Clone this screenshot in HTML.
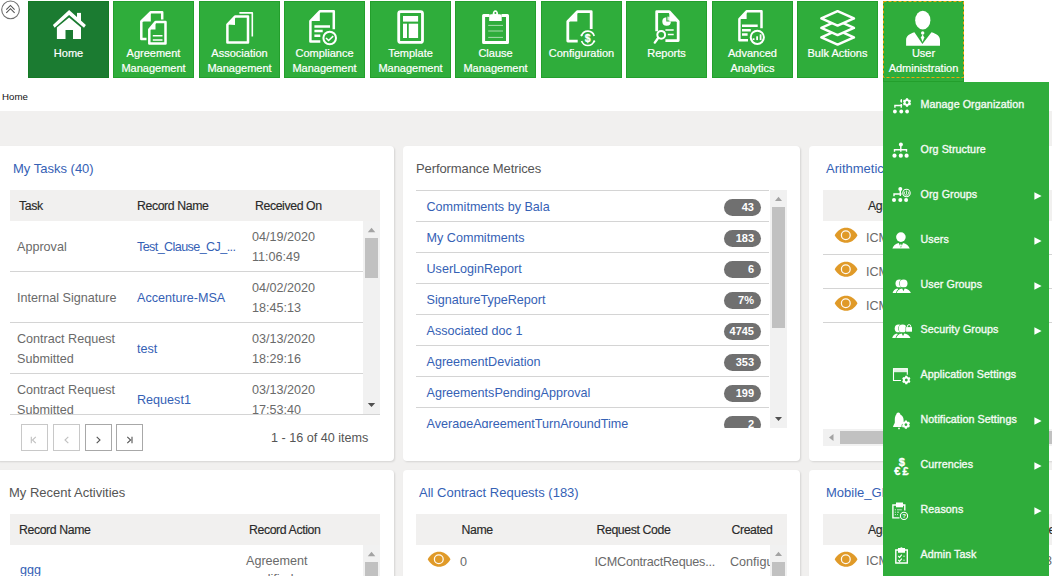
<!DOCTYPE html>
<html><head><meta charset="utf-8">
<style>
*{box-sizing:border-box;margin:0;padding:0}
html,body{width:1052px;height:576px;overflow:hidden;background:#fff;font-family:"Liberation Sans",sans-serif;position:relative}
.a{position:absolute;white-space:nowrap}
.tile{position:absolute;top:1px;width:81px;height:77px;background:#2fad3b;box-shadow:inset 0 0 0 1px rgba(0,120,0,0.25);color:#fff;font-size:11px;line-height:15px;text-align:center}
.tile .lbl{position:absolute;left:-10px;right:-10px;top:45px;-webkit-text-stroke:0.2px #fff}
.tile svg{position:absolute;left:0;top:0}
.gray{position:absolute;left:0;top:111px;width:1052px;height:465px;background:#f1f0ef}
.panel{position:absolute;background:#fff;border-radius:4px;box-shadow:1px 1px 2px rgba(0,0,0,0.12)}
.ttl{position:absolute;font-size:13px;white-space:nowrap}
.blue{color:#3561b5}
.hdr{position:absolute;background:#f1f0ef;height:31px}
.hdr span{position:absolute;top:9px;font-size:12.3px;color:#2a2a2a;white-space:nowrap;letter-spacing:-0.4px;-webkit-text-stroke:0.15px #2a2a2a}
.txt{position:absolute;font-size:12.6px;color:#6a6a6a;white-space:nowrap;line-height:20px}
.lnk{position:absolute;font-size:12.6px;color:#3561b5;white-space:nowrap;line-height:20px}
.sep{position:absolute;height:1px;background:#d4d4d4}
.track{position:absolute;background:#f1f1f1}
.thumb{position:absolute;background:#c1c1c1}
.badge{position:absolute;width:37px;height:17px;border-radius:8.5px;background:#707070;color:#fff;font-weight:bold;font-size:11px;line-height:17px;text-align:right;padding-right:7px}
.menu{position:absolute;left:883px;top:82px;width:166px;height:494px;background:#2fad3b}
.mi{position:absolute;left:37.5px;font-size:10.7px;font-weight:normal;color:#f4faf4;letter-spacing:0.09px;white-space:nowrap;-webkit-text-stroke:0.35px #f4faf4}
.arr{position:absolute;left:151px;width:8px;height:8px}
.pbtn{position:absolute;top:424px;width:27px;height:27px;border:1px solid #c8c8c8;background:#fff}
</style></head><body>

<!-- collapse circle -->
<svg class="a" style="left:0;top:0" width="22" height="22" viewBox="0 0 22 22">
<circle cx="10.55" cy="9.85" r="8.85" fill="none" stroke="#707070" stroke-width="1.1"/>
<path d="M6.3,9.7 L10.45,5.4 L14.6,9.7 M6.3,12.8 L10.45,8.7 L14.6,12.8" fill="none" stroke="#505050" stroke-width="1.05"/>
</svg>

<!-- tiles -->
<div class="tile" style="left:28px;background:#1b7b31"><div class="lbl">Home</div></div>
<div class="tile" style="left:113px"><div class="lbl">Agreement<br>Management</div></div>
<div class="tile" style="left:199px"><div class="lbl">Association<br>Management</div></div>
<div class="tile" style="left:284px"><div class="lbl">Compliance<br>Management</div></div>
<div class="tile" style="left:370px"><div class="lbl">Template<br>Management</div></div>
<div class="tile" style="left:455px"><div class="lbl">Clause<br>Management</div></div>
<div class="tile" style="left:541px"><div class="lbl">Configuration</div></div>
<div class="tile" style="left:626px"><div class="lbl">Reports</div></div>
<div class="tile" style="left:712px"><div class="lbl">Advanced<br>Analytics</div></div>
<div class="tile" style="left:797px"><div class="lbl">Bulk Actions</div></div>
<div class="tile" style="left:883px;height:81px"><div class="lbl">User<br>Administration</div></div>
<svg class="a" style="left:883px;top:1px" width="81" height="77"><rect x="0.5" y="0.5" width="80" height="76" fill="none" stroke="#f2a20a" stroke-width="1" stroke-dasharray="3 2"/></svg>

<svg class="a" style="left:0;top:0;pointer-events:none" width="1052" height="80" viewBox="0 0 1052 80">
<g fill="#fff" stroke="none">
<!-- Home -->
<rect x="77" y="12.9" width="4" height="9"/>
<polygon points="52.9,25.1 69.1,10 85.9,25.1 84,27.8 69.1,15 54.6,27.8"/>
<polygon points="69.1,17.6 81,27.6 81,39 73,39 73,30 65.5,30 65.5,39 56.9,39 56.9,27.6"/>
</g>
<g fill="none" stroke="#fff" stroke-width="2.5" stroke-linejoin="round">
<!-- Agreement back doc -->
<path d="M146.5,39 H141.3 V21.5 L150.8,12.2 H162.2 V19.5"/>
<!-- Agreement front doc -->
<path d="M155.5,22 H165.5 V43.5 H149.3 V29.5 Z"/>
<path d="M152.8,35.7 H162.5 M152.8,39.9 H162.5" stroke-width="1.5"/>
<!-- Association -->
<path d="M235,16.6 H248 V42.6 H227.4 V24.5 Z"/>
<path d="M239.4,12.9 H252.3 V36.5" stroke-width="1.6"/>
<!-- Compliance -->
<path d="M320.3,41.4 H310.4 V21 L319.8,11.3 H333.8 V29.3"/>
<path d="M314.4,26.5 H330 M314.4,31.1 H322.7 M314.4,35.7 H320.3"/>
<circle cx="329.7" cy="38" r="6.3" stroke-width="2"/>
<path d="M326,38 L328.6,40.5 L333.2,36.2" stroke-width="1.6" stroke-linejoin="miter"/>
<!-- Template -->
<rect x="398.7" y="11.6" width="23.8" height="30.8" rx="2" stroke-width="2.8"/>
<!-- Clause -->
<path d="M489.5,15.6 H483.6 V42.5 H507.5 V15.6 H501.5" stroke-width="3"/>
<path d="M488.2,25.4 H503 M488.2,31 H503 M488.2,37.4 H503" stroke-width="0.9" stroke-opacity="0.65"/>
<!-- Configuration -->
<path d="M577.7,41.1 H567.8 V21.5 L577.3,11.6 H591.2 V29" stroke-width="2.8"/>
<path d="M581.6,35.6 A6.6,6.6 0 0 1 594.2,36 M594.1,40.9 A6.6,6.6 0 0 1 581.6,41" stroke-width="1.6"/>
<!-- Reports -->
<path d="M665.4,40.6 H678.2 V21.5 L669.3,11.6 H656.7 V31.3" stroke-width="2.8"/>
<path d="M665.4,30 H673.7 M667.8,34.5 H673.7" stroke-width="1.6"/>
<circle cx="661.2" cy="34.8" r="3.9" stroke-width="2"/>
<path d="M658.3,37.8 L654.8,42.6" stroke-width="2.4" stroke-linecap="round"/>
<!-- Advanced Analytics -->
<path d="M748,40.3 H739.4 V19 L746.6,11.3 H761.5 V28.2"/>
<path d="M742,25.7 H757.7 M742,30.3 H750.75 M742,34.5 H747.6"/>
<circle cx="757.3" cy="37.3" r="6.6" stroke-width="2"/>
<!-- Bulk actions -->
<g fill="#2fad3b" stroke-width="2.5" stroke-linejoin="round">
<polygon points="821.35,37.4 837.6,30.2 853.95,37.4 837.6,44.6"/>
<polygon points="821.35,27.9 837.6,20.7 853.95,27.9 837.6,35.1"/>
<polygon points="821.35,18.4 837.6,11.2 853.95,18.4 837.6,25.6"/>
</g>
</g>
<g fill="#fff">
<!-- Agreement folds -->
<polygon points="141.3,21.5 150.8,12.2 150.8,21.5"/>
<polygon points="149.3,29.5 155.5,22 155.5,29.5"/>
<polygon points="227.3,24.5 235,16.5 235,25"/>
<polygon points="310.4,21 319.8,11.3 319.8,21"/>
<!-- template blocks -->
<rect x="403" y="16" width="15.1" height="5.6"/>
<rect x="403" y="23.7" width="4" height="14.3"/>
<rect x="408.75" y="23.7" width="9.35" height="14.3"/>
<!-- clause clip -->
<path d="M489.2,21 V15.8 Q489.2,14.2 491,14.2 H492.6 C492.8,12.4 493.6,10.2 495.4,10.2 C497.2,10.2 498,12.4 498.2,14.2 H499.9 Q501.7,14.2 501.7,15.8 V21 Z"/>
<polygon points="567.8,21.5 577.3,11.6 577.3,21.5"/>
<polygon points="669.3,11.6 678.2,21.5 669.3,21.5"/>
<path d="M666.3,17.2 A4.3,4.3 0 1 0 670.9,21.4 H666.3 Z"/><path d="M667.4,16.6 A4.3,4.3 0 0 1 671.4,20.4 H667.4 Z" opacity="0.8"/>
<polygon points="739.4,19 746.6,11.3 746.6,19"/>
<rect x="752.7" y="38.3" width="1.8" height="1.8"/>
<rect x="756.2" y="36.3" width="1.8" height="3.8"/>
<rect x="759.7" y="34.3" width="1.8" height="5.8"/>
<!-- user admin -->
<ellipse cx="922.8" cy="20.2" rx="7.6" ry="9.4"/>
<path d="M906.1,45.7 V40 C906.1,36 910,33.5 914.4,32.3 L922.4,44 L931.5,32.3 C936,33.5 940,36 940,40 V45.7 Z"/>
<circle cx="922.7" cy="33" r="1.7"/>
<polygon points="922.7,34.5 924.3,37.5 922.5,42 920.9,37.5"/>
</g>
<text x="587.6" y="42.2" font-family="Liberation Sans" font-weight="bold" font-size="10.5" fill="#fff" stroke="#fff" stroke-width="0.3" text-anchor="middle">$</text>
<circle cx="581.5" cy="35.3" r="1.1" fill="#fff"/><circle cx="594.2" cy="41.3" r="1.1" fill="#fff"/>
<circle cx="495.4" cy="12.9" r="1" fill="#2fad3b"/>
</svg>

<div class="a" style="left:2px;top:91.3px;font-size:9.7px;color:#111">Home</div>

<div class="gray"></div>

<!-- Panel 1: My Tasks -->
<div class="panel" style="left:-4px;top:146px;width:398px;height:315px"></div>
<div class="ttl blue" style="left:13px;top:161px">My Tasks (40)</div>
<div class="hdr" style="left:10px;top:190px;width:370px"><span style="left:9px">Task</span><span style="left:127px">Record Name</span><span style="left:245px">Received On</span></div>
<div class="track" style="left:363px;top:221px;width:17px;height:193px"></div>
<div class="thumb" style="left:365px;top:238px;width:13px;height:40px"></div>
<div class="sep" style="left:10px;top:271px;width:353px"></div>
<div class="sep" style="left:10px;top:322px;width:353px"></div>
<div class="sep" style="left:10px;top:373px;width:353px"></div>
<div class="sep" style="left:10px;top:414px;width:370px"></div>

<!-- P1 rows -->
<div class="txt" style="left:17px;top:237px">Approval</div>
<div class="lnk" style="left:137px;top:237px"><span style="letter-spacing:-0.6px">Test_Clause_CJ_...</span></div>
<div class="txt" style="left:252px;top:227px">04/19/2020<br>11:06:49</div>
<div class="txt" style="left:17px;top:288px">Internal Signature</div>
<div class="lnk" style="left:137px;top:288px">Accenture-MSA</div>
<div class="txt" style="left:252px;top:278px">04/02/2020<br>18:45:13</div>
<div class="txt" style="left:17px;top:329px">Contract Request<br>Submitted</div>
<div class="lnk" style="left:137px;top:339px">test</div>
<div class="txt" style="left:252px;top:329px">03/13/2020<br>18:29:16</div>
<div class="a" style="left:0;top:374px;width:363px;height:40px;overflow:hidden">
<div class="txt" style="left:17px;top:6px">Contract Request<br>Submitted</div>
<div class="lnk" style="left:137px;top:16px">Request1</div>
<div class="txt" style="left:252px;top:6px">03/13/2020<br>17:53:40</div>
</div>
<svg class="a" style="left:363px;top:221px" width="17" height="193">
<path d="M4.8,11.2 L8.5,6.8 L12.3,11.2 Z" fill="#a3a3a3"/>
<path d="M4.8,182 L8.5,186 L12.2,182 Z" fill="#505050"/>
</svg>
<!-- pager -->
<div class="pbtn" style="left:21px"></div>
<div class="pbtn" style="left:53px"></div>
<div class="pbtn" style="left:85px;border-color:#a8a8a8"></div>
<div class="pbtn" style="left:116px;border-color:#a8a8a8"></div>
<svg class="a" style="left:0;top:420px" width="160" height="36">
<g fill="none" stroke-width="1.1">
<path d="M31.3,16.8 V23.2 M35.8,16.8 L32.5,20 L35.8,23.2" stroke="#c0c0c0"/>
<path d="M68.3,16.8 L65,20 L68.3,23.2" stroke="#c0c0c0"/>
<path d="M96.7,16.8 L100,20 L96.7,23.2" stroke="#555"/>
<path d="M127.3,16.8 L130.6,20 L127.3,23.2 M132,16.8 V23.2" stroke="#555"/>
</g>
</svg>
<div class="txt" style="left:271px;top:428px;color:#555">1 - 16 of 40 items</div>

<!-- Panel 2: Performance -->
<div class="panel" style="left:403px;top:146px;width:397px;height:315px"></div>
<div class="ttl" style="left:416px;top:161px;color:#555;letter-spacing:-0.1px">Performance Metrices</div>

<div class="a" style="left:416px;top:190px;width:354px;height:238px;overflow:hidden">
<div class="sep" style="left:0;top:0px;width:353px"></div>
<div class="lnk" style="left:10.5px;top:7px">Commitments by Bala</div>
<div class="badge" style="left:308px;top:9px">43</div>
<div class="sep" style="left:0;top:31px;width:353px"></div>
<div class="lnk" style="left:10.5px;top:38px">My Commitments</div>
<div class="badge" style="left:308px;top:40px">183</div>
<div class="sep" style="left:0;top:62px;width:353px"></div>
<div class="lnk" style="left:10.5px;top:69px">UserLoginReport</div>
<div class="badge" style="left:308px;top:71px">6</div>
<div class="sep" style="left:0;top:93px;width:353px"></div>
<div class="lnk" style="left:10.5px;top:100px">SignatureTypeReport</div>
<div class="badge" style="left:308px;top:102px">7%</div>
<div class="sep" style="left:0;top:124px;width:353px"></div>
<div class="lnk" style="left:10.5px;top:131px">Associated doc 1</div>
<div class="badge" style="left:308px;top:133px">4745</div>
<div class="sep" style="left:0;top:155px;width:353px"></div>
<div class="lnk" style="left:10.5px;top:162px">AgreementDeviation</div>
<div class="badge" style="left:308px;top:164px">353</div>
<div class="sep" style="left:0;top:186px;width:353px"></div>
<div class="lnk" style="left:10.5px;top:193px">AgreementsPendingApproval</div>
<div class="badge" style="left:308px;top:195px">199</div>
<div class="sep" style="left:0;top:217px;width:353px"></div>
<div class="lnk" style="left:10.5px;top:224px">AverageAgreementTurnAroundTime</div>
<div class="badge" style="left:308px;top:226px">2</div>
</div>
<div class="track" style="left:770px;top:190px;width:17px;height:238px"></div>
<div class="thumb" style="left:772px;top:207px;width:13px;height:121px"></div>
<svg class="a" style="left:770px;top:190px" width="17" height="238">
<path d="M5,11 L8.5,6.7 L12,11 Z" fill="#a3a3a3"/>
<path d="M5,227 L8.5,231 L12,227 Z" fill="#505050"/>
</svg>

<!-- Panel 3: Arithmetic -->
<div class="panel" style="left:809px;top:146px;width:400px;height:315px"></div>
<div class="ttl blue" style="left:826px;top:161px">Arithmetic Metrics</div>
<div class="a" style="left:809px;top:146px;width:243px;height:315px;overflow:hidden">
<div class="hdr" style="left:14px;top:44px;width:400px"><span style="left:45px">Agreement Code</span></div>
<div class="sep" style="left:14px;top:108px;width:400px"></div>
<div class="sep" style="left:14px;top:142px;width:400px"></div>
<div class="sep" style="left:14px;top:176px;width:400px"></div>
<div class="txt" style="left:57px;top:81.5px">ICMAgreement</div>
<div class="txt" style="left:57px;top:115.5px">ICMAgreement</div>
<div class="txt" style="left:57px;top:149.5px">ICMAgreement</div>
<div class="track" style="left:14px;top:283px;width:400px;height:17px"></div>
<div class="thumb" style="left:31px;top:285px;width:300px;height:13px"></div>
<svg class="a" style="left:14px;top:283px" width="17" height="17"><path d="M10.5,5 L6,8.5 L10.5,12 Z" fill="#a3a3a3"/></svg>
</div>
<svg class="a" style="left:830px;top:220px" width="40" height="110">
<g fill="#e09a28">
<path id="eye" d="M4.7,15.3 C10,5.3 22.2,5.3 27.5,15.3 C22.2,25.3 10,25.3 4.7,15.3 Z"/>
<use href="#eye" y="34"/><use href="#eye" y="68"/>
</g>
<g fill="none" stroke="#fff" stroke-width="1.25" stroke-opacity="0.95">
<circle cx="15.8" cy="15.3" r="4.4"/><circle cx="15.8" cy="49.3" r="4.4"/><circle cx="15.8" cy="83.3" r="4.4"/>
</g>
</svg>


<!-- Row 2 -->
<div class="panel" style="left:-4px;top:470px;width:398px;height:120px"></div>
<div class="ttl" style="left:9px;top:485px;color:#555">My Recent Activities</div>
<div class="hdr" style="left:10px;top:514px;width:370px"><span style="left:9px">Record Name</span><span style="left:239px">Record Action</span></div>
<div class="track" style="left:363px;top:545px;width:17px;height:40px"></div>
<div class="thumb" style="left:365px;top:562px;width:13px;height:40px"></div>
<svg class="a" style="left:363px;top:545px" width="17" height="17"><path d="M4.8,11.2 L8.5,6.8 L12.3,11.2 Z" fill="#a3a3a3"/></svg>
<div class="lnk" style="left:20px;top:560px">ggg</div>
<div class="txt" style="left:246px;top:551px;line-height:20px">Agreement<br><span style="position:relative;top:-2px">modified</span></div>

<div class="panel" style="left:403px;top:470px;width:397px;height:120px"></div>
<div class="ttl blue" style="left:419px;top:485px">All Contract Requests (183)</div>
<div class="hdr" style="left:416px;top:514px;width:371px"><span style="left:45.5px">Name</span><span style="left:180.5px">Request Code</span><span style="left:315.5px">Created</span></div>
<div class="a" style="left:416px;top:545px;width:354px;height:31px;overflow:hidden">
<div class="txt" style="left:44px;top:7px">0</div>
<div class="txt" style="left:178.5px;top:7px;letter-spacing:-0.2px">ICMContractReques...</div>
<div class="txt" style="left:314px;top:7px">Configuration</div>
</div>
<div class="track" style="left:770px;top:545px;width:17px;height:40px"></div>
<div class="thumb" style="left:772px;top:562px;width:13px;height:40px"></div>
<svg class="a" style="left:770px;top:545px" width="17" height="17"><path d="M5,11 L8.5,6.7 L12,11 Z" fill="#a3a3a3"/></svg>
<svg class="a" style="left:423px;top:545px" width="40" height="31">
<path d="M4.7,14.3 C10,4.3 22.2,4.3 27.5,14.3 C22.2,24.3 10,24.3 4.7,14.3 Z" fill="#e09a28"/>
<circle cx="15.8" cy="14.3" r="4.4" fill="none" stroke="#fff" stroke-width="1.25" stroke-opacity="0.95"/>
</svg>

<div class="panel" style="left:809px;top:470px;width:400px;height:120px"></div>
<div class="ttl blue" style="left:826px;top:485px">Mobile_Global</div>
<div class="a" style="left:809px;top:470px;width:243px;height:106px;overflow:hidden">
<div class="hdr" style="left:14px;top:44px;width:400px"><span style="left:45px">Agreement Code</span><span style="left:207px">Type</span></div>
<div class="txt" style="left:57px;top:80.6px">ICMAgreement</div>
<div class="txt" style="left:236px;top:80.6px">3</div>
</div>
<svg class="a" style="left:830px;top:545px" width="40" height="31">
<path d="M4.7,14.3 C10,4.3 22.2,4.3 27.5,14.3 C22.2,24.3 10,24.3 4.7,14.3 Z" fill="#e09a28"/>
<circle cx="15.8" cy="14.3" r="4.4" fill="none" stroke="#fff" stroke-width="1.25" stroke-opacity="0.95"/>
</svg>


<!-- Menu -->
<div class="menu">
<div class="mi" style="top:16.0px;line-height:12px">Manage Organization</div>
<div class="mi" style="top:61.0px;line-height:12px">Org Structure</div>
<div class="mi" style="top:106.0px;line-height:12px">Org Groups</div>
<svg class="arr" style="top:109.7px" viewBox="0 0 8 8"><path d="M0.4,0.3 L7.6,4 L0.4,7.7 Z" fill="#fff"/></svg>
<div class="mi" style="top:151.0px;line-height:12px">Users</div>
<svg class="arr" style="top:154.7px" viewBox="0 0 8 8"><path d="M0.4,0.3 L7.6,4 L0.4,7.7 Z" fill="#fff"/></svg>
<div class="mi" style="top:196.0px;line-height:12px">User Groups</div>
<svg class="arr" style="top:199.7px" viewBox="0 0 8 8"><path d="M0.4,0.3 L7.6,4 L0.4,7.7 Z" fill="#fff"/></svg>
<div class="mi" style="top:241.0px;line-height:12px">Security Groups</div>
<svg class="arr" style="top:244.7px" viewBox="0 0 8 8"><path d="M0.4,0.3 L7.6,4 L0.4,7.7 Z" fill="#fff"/></svg>
<div class="mi" style="top:286.0px;line-height:12px">Application Settings</div>
<div class="mi" style="top:331.0px;line-height:12px">Notification Settings</div>
<svg class="arr" style="top:334.7px" viewBox="0 0 8 8"><path d="M0.4,0.3 L7.6,4 L0.4,7.7 Z" fill="#fff"/></svg>
<div class="mi" style="top:376.0px;line-height:12px">Currencies</div>
<svg class="arr" style="top:379.7px" viewBox="0 0 8 8"><path d="M0.4,0.3 L7.6,4 L0.4,7.7 Z" fill="#fff"/></svg>
<div class="mi" style="top:421.0px;line-height:12px">Reasons</div>
<svg class="arr" style="top:424.7px" viewBox="0 0 8 8"><path d="M0.4,0.3 L7.6,4 L0.4,7.7 Z" fill="#fff"/></svg>
<div class="mi" style="top:466.0px;line-height:12px">Admin Task</div>
</div>


<svg class="a" style="left:0;top:0;pointer-events:none" width="1052" height="576" viewBox="0 0 1052 576">
<defs>
<path id="gear" d="M-1.70,-2.94 L-1.16,-3.19 L-1.04,-4.17 L1.04,-4.17 L1.16,-3.19 L1.70,-2.94 L2.19,-2.60 L3.09,-2.99 L4.13,-1.19 L3.35,-0.59 L3.40,0.00 L3.35,0.59 L4.13,1.19 L3.09,2.99 L2.19,2.60 L1.70,2.94 L1.16,3.19 L1.04,4.17 L-1.04,4.17 L-1.16,3.19 L-1.70,2.94 L-2.19,2.60 L-3.09,2.99 L-4.13,1.19 L-3.35,0.59 L-3.40,-0.00 L-3.35,-0.59 L-4.13,-1.19 L-3.09,-2.99 L-2.19,-2.60 Z M0,-1.4 A1.4,1.4 0 1 0 0.01,-1.4 Z" fill-rule="evenodd"/>
</defs>
<g fill="#fff" stroke="none">
<!-- Manage Organization -->
<circle cx="894.9" cy="111.5" r="1.9"/><circle cx="901.25" cy="111.5" r="1.9"/><circle cx="907.1" cy="111.5" r="1.9"/>
<path d="M902,99.1 A1.8,1.8 0 0 0 902,102.7 Z"/>
<use href="#gear" x="907" y="102.5"/>
</g>
<g fill="none" stroke="#fff" stroke-width="1.4">
<path d="M894.9,107.7 V105.5 H902.2 M901.25,104 V107.7"/>
<!-- Org Structure -->
<path d="M894.5,151.8 V149.8 H906.5 V151.8 M900.8,146 V151.8"/>
<!-- Org Groups -->
<path d="M894,196.2 V194 H901.5 M900.3,190.5 V196"/>
<circle cx="906.5" cy="193" r="3.7" stroke-width="1.1"/>
<path d="M906.5,190.5 V194.5 M905,191.5 A2.2,2.2 0 1 0 908,191.5" stroke-width="0.8"/>
<!-- App settings -->
<path d="M900.9,380.5 H893.5 V368.7 H907.3 V374.8" stroke-width="1.1"/>
<!-- Reasons clipboard -->
<path d="M896,505 H892.9 V517.9 H899.5 M903,505 H904.8 V510.5" stroke-width="1.4"/>
<!-- Admin task clipboard -->
<path d="M898.5,550 H895.8 V563 H907.3 V550 H904.6" stroke-width="1.4"/>
<path d="M898.3,556 L899.6,557.4 L901.8,554.6 M898.3,560 L899.6,561.4 L901.8,558.6" stroke-width="1.2"/>
<path d="M903,556.2 H905 M903,560.2 H905" stroke-width="0.9" stroke-opacity="0.7"/>
</g>
<g fill="#fff" stroke="none">
<circle cx="900.9" cy="144.6" r="2"/>
<circle cx="894.5" cy="155.7" r="2.1"/><circle cx="900.8" cy="155.7" r="2.1"/><circle cx="906.6" cy="155.7" r="2.1"/>
<circle cx="900.3" cy="189" r="2"/>
<circle cx="894" cy="200" r="2"/><circle cx="900.3" cy="200" r="2"/><circle cx="906.1" cy="200" r="2"/>
<!-- Users -->
<circle cx="900.9" cy="237.1" r="4.8"/>
<path d="M892.4,248.6 C893,245.8 895.5,243.6 898.8,242.9 L900.9,248 L903,242.9 C906.3,243.6 909,245.8 909.7,248.6 Z"/><path d="M900.9,243.6 L901.7,245.3 L900.9,248 L900.1,245.3 Z"/>
<!-- User Groups -->
<circle cx="899.4" cy="283.4" r="3.9"/>
<circle cx="903.6" cy="283.4" r="3.9" stroke="#2fad3b" stroke-width="1.1" paint-order="stroke"/>
<path d="M892.6,293 C893,290.5 895,288.8 897.5,288.4 L898.5,290 L900,288.4 C902.5,288.8 904.5,290.5 905,293 Z"/>
<path d="M896.6,293 C897.2,290.5 899.5,288.8 902.2,288.4 L903.4,291.3 L904.7,288.4 C907.5,288.8 910.3,290.5 910.9,293 Z" stroke="#2fad3b" stroke-width="1.1" paint-order="stroke"/>
<!-- Security Groups -->
<circle cx="898.6" cy="328.4" r="3.9"/>
<circle cx="902.6" cy="328.4" r="3.9" stroke="#2fad3b" stroke-width="1.1" paint-order="stroke"/>
<path d="M892.2,338 C892.6,335.5 894.6,333.8 897.1,333.4 L898.1,335 L899.6,333.4 C902.1,333.8 904.1,335.5 904.6,338 Z"/>
<path d="M896.2,338 C896.8,335.5 899.1,333.8 901.8,333.4 L903,336.3 L904.3,333.4 C907.1,333.8 909.9,335.5 910.5,338 Z" stroke="#2fad3b" stroke-width="1.1" paint-order="stroke"/>
<rect x="906.1" y="327.1" width="5.9" height="4.6" stroke="#2fad3b" stroke-width="1.1" paint-order="stroke"/>
<path d="M907.4,327.3 V326.3 A1.7,1.7 0 0 1 910.8,326.3 V327.3" fill="none" stroke="#fff" stroke-width="1"/>
<!-- App settings bar -->
<rect x="893" y="368.2" width="14.8" height="4" opacity="0.85"/>
<use href="#gear" x="906.3" y="380"/>
<!-- Notification bell -->
<path d="M898.3,412.5 C899.8,412.5 900.2,413.5 900.3,414.5 C902.5,415.5 903.6,417.5 903.6,420 V422.5 C902,423.5 901.5,425 901.5,426.9 H893 C893.5,425 894.8,423.5 894.8,422.5 V419.5 C894.8,417 895.5,415.5 896.3,414.5 C896.4,413.5 897,412.5 898.3,412.5 Z"/>
<circle cx="899" cy="428.4" r="0.9"/>
<use href="#gear" x="905.9" y="424.6"/>
<!-- Reasons clip & circle -->
<path d="M896,502.5 H903 V507.3 H896 Z"/>
<path d="M894.8,509.8 H896 M897,509.8 H901.8 M894.8,512.2 H896 M897,512.2 H899 M894.8,514.6 H896 M897,514.6 H898" stroke="#fff" stroke-width="0.9" opacity="0.8"/>
<!-- Admin task clip -->
<path d="M898,548 H900.2 A1.3,1.3 0 0 1 902.6,548 H905 V552.7 H898 Z"/>
</g>
<circle cx="904" cy="515.9" r="3.6" fill="#2fad3b" stroke="#fff" stroke-width="1.1"/>
<text x="904" y="518.4" font-family="Liberation Sans" font-size="6" font-weight="bold" fill="#fff" text-anchor="middle">?</text>
<g font-family="Liberation Sans" font-weight="bold" fill="#fff" stroke="#fff" stroke-width="0.35" text-anchor="middle">
<text x="901.8" y="465.6" font-size="11">$</text>
<text x="897.4" y="474.8" font-size="11">€</text>
<text x="905.6" y="474.8" font-size="11">£</text>
</g>
</svg>

</body></html>
